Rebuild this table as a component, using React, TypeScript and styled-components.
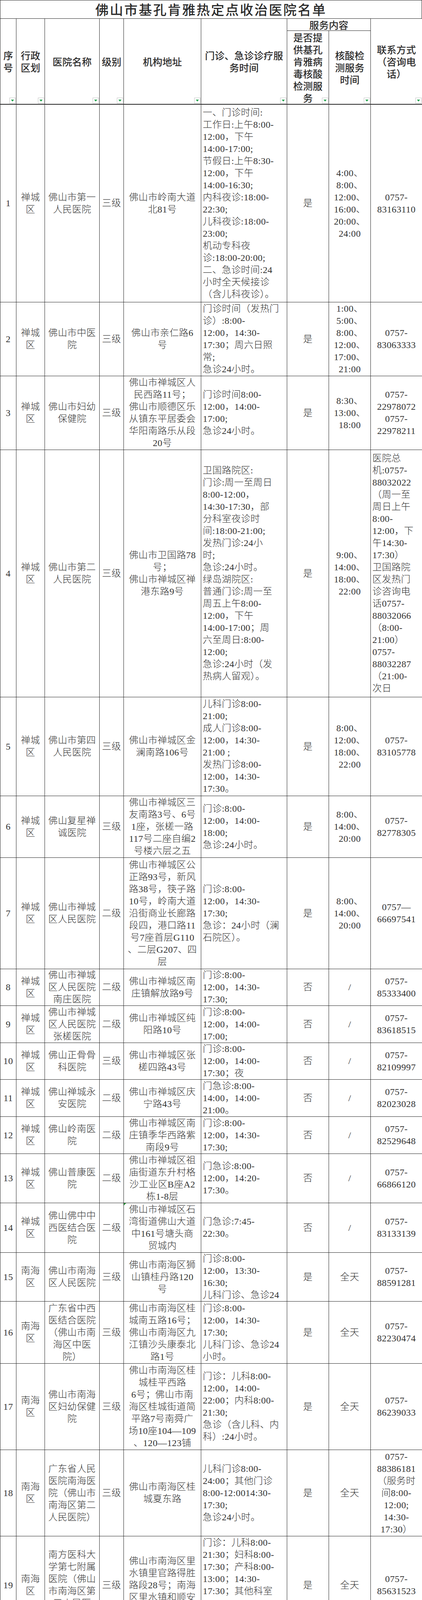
import styled, { createGlobalStyle } from 'styled-components'

const GlobalStyle = createGlobalStyle`
  html, body {
    margin: 0;
    padding: 0;
    background: #fff;
  }
`

const COLS = '41px 73px 140px 62px 198px 220px 107px 107px 132px'
const LINE = '#262626'

type Entry = {
  name: string
  addr: string
  time: string
  test: string
  slot: string
  phone: string
  h: number
  phoneLeft?: boolean
  mark?: boolean
}

type Hospital = {
  no: string
  district: string
  level: string
  subs: Entry[]
}

const one = (no: string, district: string, level: string, e: Entry): Hospital => ({ no, district, level, subs: [e] })

const hospitals: Hospital[] = [
  one('1', '禅城\n区', '三级', {
    h: 506,
    name: '佛山市第一\n人民医院',
    addr: '佛山市岭南大道\n北81号',
    time: '一、门诊时间:\n工作日:上午8:00-\n12:00，下午\n14:00-17:00;\n节假日:上午8:30-\n12:00，下午\n14:00-16:30;\n内科夜诊:18:00-\n22:30;\n儿科夜诊:18:00-\n23:00;\n机动专科夜\n诊:18:00-20:00;\n二、急诊时间:24\n小时全天候接诊\n（含儿科夜诊）。',
    test: '是',
    slot: '4:00、\n8:00、\n12:00、\n16:00、\n20:00、\n24:00',
    phone: '0757-\n83163110',
  }),
  one('2', '禅城\n区', '三级', {
    h: 189,
    name: '佛山市中医\n院',
    addr: '佛山市亲仁路6\n号',
    time: '门诊时间（发热门\n诊）:8:00-\n12:00，14:30-\n17:30；周六日照\n常;\n急诊24小时。',
    test: '是',
    slot: '1:00、\n5:00、\n8:00、\n12:00、\n17:00、\n21:00',
    phone: '0757-\n83063333',
  }),
  one('3', '禅城\n区', '三级', {
    h: 189,
    name: '佛山市妇幼\n保健院',
    addr: '佛山市禅城区人\n民西路11号；\n佛山市顺德区乐\n从镇东平居委会\n华阳南路乐从段\n20号',
    time: '门诊时间8:00-\n12:00，14:00-\n17:00;\n急诊24小时。',
    test: '是',
    slot: '8:30、\n13:00、\n18:00',
    phone: '0757-\n22978072\n0757-\n22978211',
  }),
  one('4', '禅城\n区', '三级', {
    h: 633,
    name: '佛山市第二\n人民医院',
    addr: '佛山市卫国路78\n号；\n佛山市禅城区禅\n港东路9号',
    time: '卫国路院区:\n门诊:周一至周日\n8:00-12:00，\n14:30-17:30，部\n分科室夜诊时\n间:18:00-21:00;\n发热门诊:24小\n时;\n急诊:24小时。\n绿岛湖院区:\n普通门诊:周一至\n周五上午8:00-\n12:00，下午\n14:00-17:00；周\n六至周日:8:00-\n12:00;\n急诊:24小时（发\n热病人留观）。',
    test: '是',
    slot: '9:00、\n14:00、\n18:00、\n22:00',
    phone: '医院总\n机:0757-\n88032022\n（周一至\n周日上午\n8:00-\n12:00，下\n午14:30-\n17:30）\n卫国路院\n区发热门\n诊咨询电\n话0757-\n88032066\n（8:00-\n21:00）\n0757-\n88032287\n（21:00-\n次日',
    phoneLeft: true,
  }),
  one('5', '禅城\n区', '三级', {
    h: 253,
    name: '佛山市第四\n人民医院',
    addr: '佛山市禅城区金\n澜南路106号',
    time: '儿科门诊8:00-\n21:00;\n成人门诊8:00-\n12:00，14:30-\n21:00 ;\n发热门诊8:00-\n12:00，14:30-\n17:30。',
    test: '是',
    slot: '8:00、\n12:00、\n18:00、\n22:00',
    phone: '0757-\n83105778',
  }),
  one('6', '禅城\n区', '三级', {
    h: 158,
    name: '佛山复星禅\n诚医院',
    addr: '佛山市禅城区三\n友南路3号、6号\n1座，张槎一路\n117号二座自编2\n号楼六层之五',
    time: '门诊:8:00-\n12:00，14:00-\n18:00;\n急诊:24小时。',
    test: '是',
    slot: '8:00、\n14:00、\n20:00',
    phone: '0757-\n82778305',
  }),
  one('7', '禅城\n区', '二级', {
    h: 285,
    name: '佛山市禅城\n区人民医院',
    addr: '佛山市禅城区公\n正路93号，新风\n路38号，筷子路\n10号，岭南大道\n沿街商业长廊路\n段四，港口路11\n号7座首层G110\n、二层G207、四\n层',
    time: '门诊:8:00-\n12:00，14:30-\n17:30;\n急诊：24小时（澜\n石院区）。',
    test: '是',
    slot: '8:00、\n14:00、\n20:00',
    phone: '0757—\n66697541',
  }),
  one('8', '禅城\n区', '二级', {
    h: 94,
    name: '佛山市禅城\n区人民医院\n南庄医院',
    addr: '佛山市禅城区南\n庄镇解放路9号',
    time: '门诊:8:00-\n12:00，14:30-\n17:30;',
    test: '否',
    slot: '/',
    phone: '0757-\n85333400',
  }),
  one('9', '禅城\n区', '二级', {
    h: 95,
    name: '佛山市禅城\n区人民医院\n张槎医院',
    addr: '佛山市禅城区纯\n阳路10号',
    time: '门诊:8:00-\n12:00，14:00-\n17:00;',
    test: '否',
    slot: '/',
    phone: '0757-\n83618515',
  }),
  one('10', '禅城\n区', '三级', {
    h: 94,
    name: '佛山正骨骨\n科医院',
    addr: '佛山市禅城区张\n槎四路43号',
    time: '门诊:8:00-\n12:00，14:00-\n17:30；夜',
    test: '否',
    slot: '/',
    phone: '0757-\n82109997',
  }),
  one('11', '禅城\n区', '二级', {
    h: 95,
    name: '佛山禅城永\n安医院',
    addr: '佛山市禅城区庆\n宁路43号',
    time: '门急诊:8:00-\n14:00，14:00-\n21:00。',
    test: '否',
    slot: '/',
    phone: '0757-\n82023028',
  }),
  one('12', '禅城\n区', '二级', {
    h: 95,
    name: '佛山岭南医\n院',
    addr: '佛山市禅城区南\n庄镇季华西路紫\n南段9号',
    time: '门诊:8:00-\n12:00，14:30-\n17:30;',
    test: '否',
    slot: '/',
    phone: '0757-\n82529648',
  }),
  one('13', '禅城\n区', '二级', {
    h: 126,
    name: '佛山普康医\n院',
    addr: '佛山市禅城区祖\n庙街道东升村格\n沙工业区B座A2\n栋1-8层',
    time: '门急诊:8:00-\n12:00，14:20-\n17:30。',
    test: '否',
    slot: '/',
    phone: '0757-\n66866120',
  }),
  one('14', '禅城\n区', '二级', {
    h: 127,
    name: '佛山佛中中\n西医结合医\n院',
    addr: '佛山市禅城区石\n湾街道佛山大道\n中161号塘头商\n贸城内',
    time: '门急诊:7:45-\n22:30。',
    test: '否',
    slot: '/',
    phone: '0757-\n83133139',
    mark: true,
  }),
  one('15', '南海\n区', '三级', {
    h: 125,
    name: '佛山市南海\n区人民医院',
    addr: '佛山市南海区狮\n山镇桂丹路120\n号',
    time: '门诊:8:00-\n12:00，13:30-\n16:30;\n儿科门诊、急诊24',
    test: '是',
    slot: '全天',
    phone: '0757-\n88591281',
  }),
  one('16', '南海\n区', '三级', {
    h: 159,
    name: '广东省中西\n医结合医院\n（佛山市南\n海区中医\n院）',
    addr: '佛山市南海区桂\n城南五路16号；\n佛山市南海区九\n江镇沙头康泰北\n路1号',
    time: '门诊:8:00-\n12:00，14:30-\n17:30;\n儿科门诊、急诊24\n小时。',
    test: '是',
    slot: '全天',
    phone: '0757-\n82230474',
  }),
  one('17', '南海\n区', '三级', {
    h: 221,
    name: '佛山市南海\n区妇幼保健\n院',
    addr: '佛山市南海区桂\n城桂平西路\n6号；佛山市南\n海区桂城街道简\n平路7号南舜广\n场10座104—109\n、120—123铺',
    time: '门诊：儿科8:00-\n12:00，14:00-\n22:00；内科8:00-\n21:30;\n急诊（含儿科、内\n科）:24小时。',
    test: '是',
    slot: '全天',
    phone: '0757-\n86239033',
  }),
  one('18', '南海\n区', '三级', {
    h: 221,
    name: '广东省人民\n医院南海医\n院（佛山市\n南海区第二\n人民医院）',
    addr: '佛山市南海区桂\n城夏东路',
    time: '儿科门诊8:00-\n24:00；其他门诊\n8:00-12:0014:30-\n17:30;\n急诊24小时。',
    test: '是',
    slot: '全天',
    phone: '0757-\n88386181\n（服务时\n间8:00-\n12:00;\n14:30-\n17:30）',
  }),
  one('19', '南海\n区', '三级', {
    h: 251,
    name: '南方医科大\n学第七附属\n医院（佛山\n市南海区第\n三人民医\n院）',
    addr: '佛山市南海区里\n水镇里官路得胜\n路段28号；南海\n区里水镇和顺安\n康路7号',
    time: '门诊：儿科8:00-\n21:30；妇科8:00-\n17:30；产科8:00-\n13:00；14:30-\n17:30；其他科室\n8:00-12:00，\n14:30-17:30;\n急诊:24小时。',
    test: '是',
    slot: '全天',
    phone: '0757-\n85631523',
  }),
  one('20', '南海\n区', '三级', {
    h: 192,
    name: '佛山市南海\n区第四人民\n医院（佛山\n市南海区西\n樵人民医\n院）',
    addr: '佛山市南海区西\n樵镇崇南村明德\n“北丫塱”',
    time: '内科门诊：儿科\n8:00-12:00，\n14:30-22:00；其\n他科室8:00-\n12:00，14:30-\n17:30;',
    test: '是',
    slot: '8:00-\n19:00',
    phone: '0757-\n86866930',
  }),
  one('21', '南海\n区', '三级', {
    h: 156,
    name: '佛山市南海\n区第五人民\n医院（佛山\n市南海区大\n沥医院）',
    addr: '佛山市南海区大\n沥镇钟边路\n63号；南海区大\n沥镇城南二路3\n号土资大厦二层',
    time: '门诊：儿科8:00-\n22:00；其余专科\n08:00-12,14:30-\n17:30;\n急诊:24小时开诊',
    test: '是',
    slot: '全天',
    phone: '0757-\n81093818',
  }),
  one('22', '南海\n区', '三级', {
    h: 158,
    name: '佛山市南海\n区第六人民\n医院（佛山\n市南海区黄\n岐医院）',
    addr: '南海区黄岐黄海\n路58号',
    time: '门诊：儿科8:00-\n24:00；其余专科\n8:00-\n12:00,14:30-\n17:30;',
    test: '是',
    slot: '全天',
    phone: '0757-\n85919227',
  }),
  one('23', '南海\n区', '三级', {
    h: 158,
    name: '佛山市南海\n区第七人民\n医院（佛山\n市南海区盐\n步医院）',
    addr: '南海区盐步跃进\n路2号',
    time: '门诊：儿科8:00-\n22:00；其余专科\n8:00-\n12:00,14:30-\n17:30;',
    test: '是',
    slot: '全天',
    phone: '0757-\n85779999',
  }),
  one('24', '南海\n区', '二级', {
    h: 222,
    name: '佛山市南海\n区第八人民\n医院（佛山\n市南海区丹\n灶镇医院）',
    addr: '南海区丹灶镇西\n环路109号，南\n海区丹灶镇金沙\n城区金业路',
    time: '丹灶院区儿科门\n诊:08:00-12:00;\n14:00-21:00；其\n余专科门诊8:00-\n12:00,14:00-\n17:00;\n急诊:24小时。',
    test: '是',
    slot: '全天',
    phone: '0757-\n85413156',
  }),
  one('25', '南海\n区', '二级', {
    h: 188,
    name: '佛山市南海\n区第九人民\n医院\n（佛山市南\n海区九江镇\n医院）',
    addr: '南海区九江镇儒\n林西路50号',
    time: '门诊：儿科8:00-\n22:00；其余专科\n8:00-\n12:00,14:30-\n17:30;\n急诊：24小时。',
    test: '否',
    slot: '/',
    phone: '0757-\n86567213',
  }),
  {
    no: '26',
    district: '南海\n区',
    level: '二级',
    subs: [
      {
        h: 221,
        name: '南海经济开\n发区人民医\n院（松岗院\n区）',
        addr: '南海区狮山镇松\n岗新城区',
        time: '内科、儿科、外科\n门诊:8:00-\n12:00，14:30-\n22:00；其他专科\n门诊8:00-\n12:00,14:30-\n17:30;',
        test: '否',
        slot: '/',
        phone: '0757-\n85220100',
      },
      {
        h: 221,
        name: '南海经济开\n发区人民医\n院（小塘院\n区）',
        addr: '南海区狮山镇小\n塘三环路',
        time: '内科、儿科、外科\n门诊:8:00-\n12:00；14:30-\n22:00；其他专科\n门诊8:00-12:00,\n14:30-17:30;\n急诊24小时。',
        test: '否',
        slot: '/',
        phone: '0757-\n86662335',
      },
      {
        h: 222,
        name: '南海经济开\n发区人民医\n院（官窑院\n区）',
        addr: '南海区狮山镇官\n窑凤源西路14号',
        time: '内科、儿科、外科\n门诊:8:00-\n12:00；14:30-\n22:00；其他专科\n门诊8:00-12:00,\n14:30-17:30;\n急诊24小时。',
        test: '是',
        slot: '全天',
        phone: '0757-\n85886252',
      },
    ],
  },
  one('27', '南海\n区', '二级', {
    h: 284,
    name: '佛山市南海\n区公共卫生\n医院（佛山\n市南海区人\n民医院罗村\n医院、佛山\n市南海区精\n神卫生中\n心）',
    addr: '佛山市南海区狮\n山镇罗村社会管\n理处沿江北路3\n号；南海区狮山\n镇招大村南海区\n公安局监管大\n队；佛山市南海\n区狮山镇西站南\n路9号佛山西站',
    time: '门诊:8:00-\n12:00，14:30-\n17:30;\n儿科门诊:8:00-\n12:00，14:30-\n22:00;\n急诊24小时。',
    test: '是',
    slot: '全天',
    phone: '0757-\n86416707',
  }),
  one('28', '南海\n区', '二级', {
    h: 189,
    name: '佛山市南海\n区全科医院',
    addr: '佛山市佛平路40\n号',
    time: '门诊:8:00-12:00\n、14:30-17:30;\n儿科门诊:8:00-\n12:00，14:30-\n17:30;\n急诊24小时开诊。',
    test: '否',
    slot: '/',
    phone: '0757-\n86229501',
  }),
  one('29', '顺德\n区', '三级', {
    h: 189,
    name: '南方医科大\n学第八附属\n医院',
    addr: '佛山市顺德区伦\n教街道办事处荔\n村村委会甲子路\n1号',
    time: '门诊:8:00-\n12:00，14:00-\n17:00；急诊、发\n热门诊24小时。',
    test: '是',
    slot: '4:00、\n8:00、\n12:00、\n17:00、\n20:00、\n24:00',
    phone: '0757-\n22220999',
  }),
  one('30', '顺德\n区', '三级', {
    h: 158,
    name: '广州中医药\n大学顺德医\n院',
    addr: '佛山市顺德区大\n良街道顺峰山、\n南江新中路4号\n、宜新路、环市\n东路',
    time: '门诊上午8:00-\n12:00；14:00-\n17:00（周六日休\n息）;\n急诊24小时。',
    test: '否',
    slot: '/',
    phone: '0757—\n22322727\n（急诊）',
  }),
  one('31', '顺德\n区', '三级', {
    h: 569,
    name: '广东医科大\n学顺德妇女\n儿童医院',
    addr: '佛山市顺德区大\n良街道保健路3\n号、12-22号，\n东明路33号至37\n号，德政路\n2号，高坎下街\n38号，东宏路珠\n江楼B1座2号铺\n、B1座二层商场\n1号、B2座1-2号\n铺、B2座二层商\n场1号、E1座1号\n铺、E座二层商\n场1号、F1座二\n层商场1号、鉴\n海南路14号1层\n、2层、3层附属\n楼',
    time: '门诊8:00-12:00,\n14:00-17:00;\n急诊24小时。',
    test: '否',
    slot: '/',
    phone: '0757-\n22663000',
  }),
  one('32', '顺德\n区', '二级', {
    h: 190,
    name: '暨南大学附\n属口腔医院',
    addr: '佛山市顺德区大\n良街道环市南路\n2号',
    time: '门诊8:00-12:00,\n14:30-17:30;\n急诊24小时。',
    test: '是',
    slot: '全天',
    phone: '0757-\n22913535\n（客服）\n0757-\n22913603\n（急诊）',
  }),
]

const Sheet = styled.div`
  width: 1080px;
  box-sizing: border-box;
  border-left: 1px solid ${LINE};
  background: #fff;
`

const Title = styled.div`
  height: 48px;
  box-sizing: border-box;
  border-top: 1px solid ${LINE};
  border-right: 1px solid ${LINE};
  border-bottom: 1px solid ${LINE};
  display: flex;
  align-items: center;
  justify-content: center;
  font-family: 'Noto Sans CJK SC', sans-serif;
  font-size: 34px;
  font-weight: 500;
  line-height: 1;
  letter-spacing: 3px;
  color: #2b2b2b;
`

const Head = styled.div`
  display: grid;
  grid-template-columns: ${COLS};
  grid-template-rows: 31px 189px;
`

const HeadCell = styled.div<{ $rows?: number; $cols?: number; $thin?: boolean }>`
  position: relative;
  grid-row: span ${p => p.$rows ?? 1};
  grid-column: span ${p => p.$cols ?? 1};
  min-height: 0;
  box-sizing: border-box;
  border-right: 1px solid ${LINE};
  border-bottom: ${p => (p.$thin ? '1px' : '2px')} solid ${LINE};
  display: flex;
  align-items: center;
  justify-content: center;
  text-align: center;
  white-space: pre;
  font-family: 'Noto Sans CJK SC', sans-serif;
  font-size: 25px;
  font-weight: 500;
  line-height: ${p => (p.$thin ? '26px' : '31px')};
  color: #2b2b2b;
`

const Filter = styled.span`
  position: absolute;
  right: 1px;
  bottom: 1px;
  width: 16px;
  height: 15px;
  box-sizing: border-box;
  border: 1px solid #c4c4c4;
  background: #fff;
  display: flex;
  align-items: center;
  justify-content: center;

  &::after {
    content: '';
    border-left: 4px solid transparent;
    border-right: 4px solid transparent;
    border-top: 5px solid #22a04b;
  }
`

const Line = styled.div<{ $rows: string }>`
  display: grid;
  grid-template-columns: ${COLS};
  grid-template-rows: ${p => p.$rows};
`

const Cell = styled.div<{ $rows?: number; $left?: boolean; $mark?: boolean }>`
  position: relative;
  grid-row: span ${p => p.$rows ?? 1};
  min-height: 0;
  box-sizing: border-box;
  border-right: 1px solid ${LINE};
  border-bottom: 1px solid ${LINE};
  display: flex;
  align-items: center;
  justify-content: ${p => (p.$left ? 'flex-start' : 'center')};
  text-align: ${p => (p.$left ? 'left' : 'center')};
  padding: 0 ${p => (p.$left ? '4px' : '0')};
  white-space: pre;
  font-family: 'Liberation Serif', 'Noto Sans CJK SC', serif;
  font-size: 24px;
  font-weight: 300;
  letter-spacing: 0.4px;
  line-height: 31px;
  color: #333;

  &::before {
    content: '';
    display: ${p => (p.$mark ? 'block' : 'none')};
    position: absolute;
    top: 0;
    left: 0;
    border-top: 6px solid #2e9b3e;
    border-right: 6px solid transparent;
  }
`

const EntryCells = ({ e }: { e: Entry }) => (
  <>
    <Cell $mark={e.mark}>{e.addr}</Cell>
    <Cell $left>{e.time}</Cell>
    <Cell>{e.test}</Cell>
    <Cell>{e.slot}</Cell>
    <Cell $left={e.phoneLeft}>{e.phone}</Cell>
  </>
)

const SubRow = styled.div`
  display: contents;
`

const HospitalRow = ({ item }: { item: Hospital }) => {
  const n = item.subs.length
  const [first, ...rest] = item.subs
  return (
    <Line $rows={item.subs.map(s => `${s.h}px`).join(' ')}>
      <Cell $rows={n}>{item.no}</Cell>
      <Cell $rows={n}>{item.district}</Cell>
      <Cell>{first.name}</Cell>
      <Cell $rows={n}>{item.level}</Cell>
      <EntryCells e={first} />
      {rest.map((s, i) => (
        <SubRow key={i}>
          <Cell>{s.name}</Cell>
          <EntryCells e={s} />
        </SubRow>
      ))}
    </Line>
  )
}

export default function App() {
  return (
    <>
      <GlobalStyle />
      <Sheet>
        <Title>佛山市基孔肯雅热定点收治医院名单</Title>
        <Head>
          <HeadCell $rows={2}>{'序\n号'}<Filter /></HeadCell>
          <HeadCell $rows={2}>{'行政\n区划'}<Filter /></HeadCell>
          <HeadCell $rows={2}>医院名称<Filter /></HeadCell>
          <HeadCell $rows={2}>级别<Filter /></HeadCell>
          <HeadCell $rows={2}>机构地址<Filter /></HeadCell>
          <HeadCell $rows={2}>{'门诊、急诊诊疗服\n务时间'}<Filter /></HeadCell>
          <HeadCell $cols={2} $thin>服务内容</HeadCell>
          <HeadCell $rows={2}>{'联系方式\n（咨询电\n话）'}<Filter /></HeadCell>
          <HeadCell>{'是否提\n供基孔\n肯雅病\n毒核酸\n检测服\n务'}<Filter /></HeadCell>
          <HeadCell>{'核酸检\n测服务\n时间'}<Filter /></HeadCell>
        </Head>
        {hospitals.map(item => (
          <HospitalRow key={item.no} item={item} />
        ))}
      </Sheet>
    </>
  )
}
